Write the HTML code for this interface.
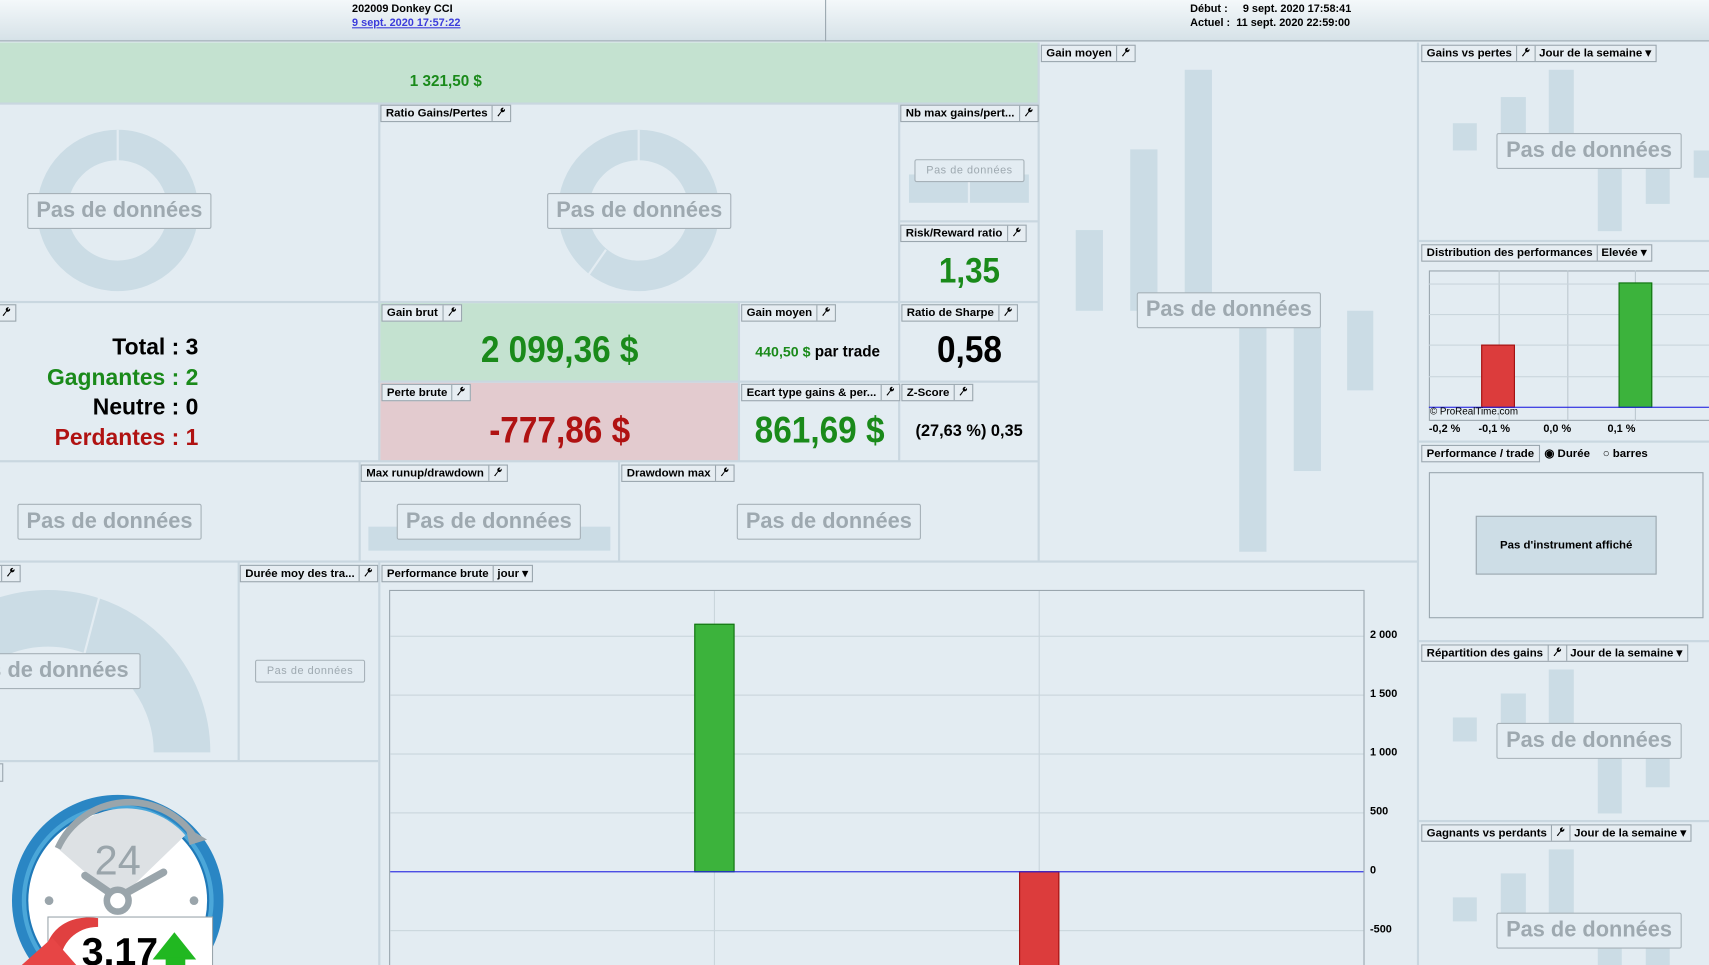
<!DOCTYPE html>
<html><head><meta charset="utf-8"><style>
*{margin:0;padding:0;box-sizing:border-box}
html,body{width:1709px;height:965px;overflow:hidden;background:#e3ecf2;font-family:"Liberation Sans",Arial,sans-serif}
#s{position:absolute;left:0;top:0;width:1568px;height:885px;transform:scale(1.0899,1.0904);transform-origin:0 0;overflow:hidden;background:#e3ecf2}
.a{position:absolute}
.h{position:absolute;height:2px;background:#c9d7e0}
.v{position:absolute;width:2px;background:#c9d7e0}
.g{position:absolute;background:#cbdce5}
.tab{position:absolute;height:16px;border:1px solid #9aa6ae;background:#e6edf2;font-size:10.5px;font-weight:bold;line-height:14px;padding:0 4px;white-space:nowrap;color:#000;display:flex;align-items:center}
.tab span{display:inline-block}
.tab .w{border-left:1px solid #9aa6ae;margin-left:4px;padding-left:3px;height:14px;line-height:14px}
.pd{position:absolute;border:1px solid #a6b1b8;background:#e3ecf2;color:#9ea9b0;font-weight:bold;font-size:20px;text-align:center;border-radius:2px}
.big{position:absolute;font-weight:bold;text-align:center;transform:scaleX(.9)}
</style></head><body>
<svg width="0" height="0" style="position:absolute"><defs><symbol id="wr" viewBox="0 0 10 10"><path d="M1.5 9.2 L5.2 4.6 A2.4 2.4 0 0 1 8 1 L6.6 2.8 L7.6 3.6 L9 2 A2.4 2.4 0 0 1 5.8 5.2 L2.6 9.8 Z" fill="#000"/></symbol></defs></svg>
<div id="s">
<!-- header -->
<div class="a" style="left:0;top:0;width:1568px;height:38px;background:linear-gradient(#f4f8fa,#d6e2e8);border-bottom:1px solid #9aa7af"></div>
<div class="a" style="left:757px;top:0;width:1px;height:38px;background:#9aa7af"></div>
<div class="a" style="left:323px;top:3px;font-size:10px;font-weight:bold">202009 Donkey CCI</div>
<div class="a" style="left:323px;top:16px;font-size:10px;font-weight:bold;color:#3b3bdb;text-decoration:underline">9 sept. 2020 17:57:22</div>
<div class="a" style="left:1092px;top:3px;font-size:10px;font-weight:bold;white-space:pre">Début :     9 sept. 2020 17:58:41</div>
<div class="a" style="left:1092px;top:16px;font-size:10px;font-weight:bold;white-space:pre">Actuel :  11 sept. 2020 22:59:00</div>
<!-- green band -->
<div class="a" style="left:0;top:39px;width:953px;height:55px;background:#c4e2d0"></div>
<div class="a" style="left:376px;top:66px;font-size:14px;font-weight:bold;color:#1a8a1a">1 321,50 $</div>
<!-- panel backgrounds -->
<div class="a" style="left:349px;top:278px;width:329px;height:72px;background:#c4e2d0"></div>
<div class="a" style="left:349px;top:351px;width:329px;height:72px;background:#e3cbcf"></div>
<!-- dividers -->
<div class="h" style="left:0;top:94px;width:953px"></div>
<div class="h" style="left:0;top:276px;width:953px"></div>
<div class="h" style="left:347px;top:349px;width:606px"></div>
<div class="h" style="left:0;top:422px;width:953px"></div>
<div class="h" style="left:0;top:514px;width:1301px"></div>
<div class="h" style="left:824px;top:202px;width:129px"></div>
<div class="h" style="left:0;top:697px;width:347px"></div>
<div class="v" style="left:347px;top:94px;height:329px"></div>
<div class="v" style="left:824px;top:94px;height:329px"></div>
<div class="v" style="left:677px;top:277px;height:146px"></div>
<div class="v" style="left:952px;top:39px;height:476px"></div>
<div class="v" style="left:1300px;top:39px;height:846px"></div>
<div class="v" style="left:329px;top:423px;height:92px"></div>
<div class="v" style="left:567px;top:423px;height:92px"></div>
<div class="v" style="left:218px;top:515px;height:183px"></div>
<div class="v" style="left:347px;top:515px;height:370px"></div>
<div class="h" style="left:1301px;top:220px;width:267px"></div>
<div class="h" style="left:1301px;top:404px;width:267px"></div>
<div class="h" style="left:1301px;top:587px;width:267px"></div>
<div class="h" style="left:1301px;top:752px;width:267px"></div>

<!-- donuts -->
<svg class="a" style="left:0;top:94px" width="700" height="183">
<circle cx="108" cy="99" r="60" fill="none" stroke="#cbdce5" stroke-width="28"/>
<line x1="108" y1="25" x2="108" y2="55" stroke="#e3ecf2" stroke-width="2"/>
<circle cx="586" cy="99" r="60" fill="none" stroke="#cbdce5" stroke-width="28"/>
<line x1="586" y1="25" x2="586" y2="55" stroke="#e3ecf2" stroke-width="2"/>
<line x1="556" y1="135" x2="540" y2="158" stroke="#e3ecf2" stroke-width="2"/>
</svg>
<div class="pd" style="left:25px;top:177px;width:169px;height:33px;line-height:31px">Pas de données</div>
<div class="pd" style="left:502px;top:177px;width:169px;height:33px;line-height:31px">Pas de données</div>
<div class="tab" style="left:349px;top:96px"><span>Ratio Gains/Pertes</span><span class="w"><svg width="9" height="9"><use href="#wr"/></svg></span></div>

<!-- Nb max -->
<div class="g" style="left:834px;top:160px;width:54px;height:26px"></div>
<div class="g" style="left:890px;top:160px;width:54px;height:26px"></div>
<div class="pd" style="left:839px;top:146px;width:101px;height:21px;font-size:10px;line-height:19px;font-weight:normal;letter-spacing:.5px">Pas de données</div>
<div class="tab" style="left:826px;top:96px"><span>Nb max gains/pert...</span><span class="w"><svg width="9" height="9"><use href="#wr"/></svg></span></div>
<div class="tab" style="left:826px;top:206px"><span>Risk/Reward ratio</span><span class="w"><svg width="9" height="9"><use href="#wr"/></svg></span></div>
<div class="big" style="left:826px;top:230px;width:127px;font-size:32px;color:#1a8a1a">1,35</div>

<!-- stats -->
<div class="a" style="left:0;top:305px;width:182px;text-align:right;font-size:21px;font-weight:bold;line-height:27.5px">
<div>Total : 3</div><div style="color:#1a8a1a">Gagnantes : 2</div><div>Neutre : 0</div><div style="color:#b01212">Perdantes : 1</div></div>
<div class="tab" style="left:-30px;top:279px"><span>xxx</span><span class="w"><svg width="9" height="9"><use href="#wr"/></svg></span></div>

<div class="tab" style="left:350px;top:279px"><span>Gain brut</span><span class="w"><svg width="9" height="9"><use href="#wr"/></svg></span></div>
<div class="big" style="left:349px;top:302px;width:329px;font-size:34px;color:#1a8a1a">2 099,36 $</div>
<div class="tab" style="left:350px;top:352px"><span>Perte brute</span><span class="w"><svg width="9" height="9"><use href="#wr"/></svg></span></div>
<div class="big" style="left:349px;top:376px;width:329px;font-size:34px;color:#b01212">-777,86 $</div>
<div class="tab" style="left:680px;top:279px"><span>Gain moyen</span><span class="w"><svg width="9" height="9"><use href="#wr"/></svg></span></div>
<div class="a" style="left:693px;top:314px;font-size:14px;font-weight:bold;white-space:nowrap"><span style="color:#1a8a1a;font-size:13px">440,50 $</span> par trade</div>
<div class="tab" style="left:680px;top:352px"><span>Ecart type gains &amp; per...</span><span class="w"><svg width="9" height="9"><use href="#wr"/></svg></span></div>
<div class="big" style="left:680px;top:376px;width:144px;font-size:34px;color:#1a8a1a">861,69 $</div>
<div class="tab" style="left:827px;top:279px"><span>Ratio de Sharpe</span><span class="w"><svg width="9" height="9"><use href="#wr"/></svg></span></div>
<div class="big" style="left:826px;top:302px;width:127px;font-size:34px">0,58</div>
<div class="tab" style="left:827px;top:352px"><span>Z-Score</span><span class="w"><svg width="9" height="9"><use href="#wr"/></svg></span></div>
<div class="a" style="left:840px;top:387px;font-size:15px;font-weight:bold">(27,63 %) 0,35</div>

<!-- row 423-515 -->
<div class="pd" style="left:16px;top:462px;width:169px;height:33px;line-height:31px">Pas de données</div>
<div class="g" style="left:338px;top:483px;width:222px;height:22px"></div>
<div class="pd" style="left:364px;top:462px;width:169px;height:33px;line-height:31px">Pas de données</div>
<div class="tab" style="left:331px;top:426px"><span>Max runup/drawdown</span><span class="w"><svg width="9" height="9"><use href="#wr"/></svg></span></div>
<div class="pd" style="left:676px;top:462px;width:169px;height:33px;line-height:31px">Pas de données</div>
<div class="tab" style="left:570px;top:426px"><span>Drawdown max</span><span class="w"><svg width="9" height="9"><use href="#wr"/></svg></span></div>

<!-- gauge -->
<svg class="a" style="left:0;top:515px" width="218" height="183">
<path d="M-79 175 A123 123 0 0 1 167 175" fill="none" stroke="#cbdce5" stroke-width="52"/>
<line x1="92" y1="29" x2="76" y2="90" stroke="#e3ecf2" stroke-width="2"/>
</svg>
<div class="pd" style="left:-40px;top:599px;width:169px;height:33px;line-height:31px;text-align:right;padding-right:10px">Pas de données</div>
<div class="tab" style="left:-20px;top:518px"><span>xx</span><span class="w"><svg width="9" height="9"><use href="#wr"/></svg></span></div>
<div class="tab" style="left:220px;top:518px"><span>Durée moy des tra...</span><span class="w"><svg width="9" height="9"><use href="#wr"/></svg></span></div>
<div class="pd" style="left:234px;top:605px;width:101px;height:21px;font-size:10px;line-height:19px;font-weight:normal;letter-spacing:.5px">Pas de données</div>
<div class="a" style="left:-5px;top:700px;width:8px;height:17px;border:1px solid #9aa6ae"></div>

<!-- clock -->
<svg class="a" style="left:0;top:720px" width="220" height="165">
<circle cx="108" cy="106" r="97" fill="#2a86c4"/>
<circle cx="108" cy="106" r="88" fill="#4ba7d9"/>
<circle cx="108" cy="106" r="84" fill="#1f79b8"/>
<circle cx="108" cy="106" r="82" fill="#fff"/>
<path d="M53 58 A72 72 0 0 1 170 46 L108 106 Z" fill="#dde1e4"/>
<path d="M53 58 A72 72 0 0 1 178 47" fill="none" stroke="#9aa5ab" stroke-width="6"/>
<path d="M170 38 L190 50 L174 55 Z" fill="#9aa5ab"/>
<text x="108" y="82" text-anchor="middle" font-family="Liberation Sans" font-size="38" fill="#9aa5ab">24</text>
<path d="M78 83 L104 101 M112 101 L150 80" stroke="#9aa5ab" stroke-width="7" stroke-linecap="round"/>
<circle cx="108" cy="106" r="10" fill="#fff" stroke="#9aa5ab" stroke-width="6"/>
<circle cx="45" cy="106" r="4" fill="#9aa5ab"/><circle cx="178" cy="106" r="4" fill="#9aa5ab"/>
<rect x="44" y="121" width="151" height="50" fill="#fff" stroke="#9aa5ab"/>
<path d="M90 122 C60 118 40 135 40 165 L55 165 C55 145 70 130 90 130 Z" fill="#e04040"/>
<path d="M20 165 L48 140 L70 165 Z" fill="#e74545"/>
<path d="M160 135 L180 160 L140 160 Z" fill="#21b821"/>
<rect x="152" y="158" width="18" height="10" fill="#21b821"/>
<text x="110" y="165" text-anchor="middle" font-family="Liberation Sans" font-weight="bold" font-size="36">3,17</text>
</svg>

<!-- Gain moyen big panel -->
<div class="g" style="left:987px;top:211px;width:25px;height:74px"></div>
<div class="g" style="left:1037px;top:137px;width:25px;height:148px"></div>
<div class="g" style="left:1087px;top:64px;width:25px;height:221px"></div>
<div class="g" style="left:1137px;top:285px;width:25px;height:221px"></div>
<div class="g" style="left:1187px;top:285px;width:25px;height:147px"></div>
<div class="g" style="left:1236px;top:285px;width:24px;height:73px"></div>
<div class="pd" style="left:1043px;top:268px;width:169px;height:33px;line-height:31px">Pas de données</div>
<div class="tab" style="left:955px;top:41px"><span>Gain moyen</span><span class="w"><svg width="9" height="9"><use href="#wr"/></svg></span></div>

<!-- Performance brute chart -->
<div class="tab" style="left:350px;top:518px"><span>Performance brute</span><span class="w">jour ▾</span></div>
<div class="a" style="left:357px;top:541px;width:895px;height:350px;border:1px solid #9aa6ae"></div>
<div class="a" style="left:655px;top:542px;width:1px;height:343px;background:#c9d5dc"></div>
<div class="a" style="left:953px;top:542px;width:1px;height:343px;background:#c9d5dc"></div>
<div class="a" style="left:358px;top:583px;width:893px;height:1px;background:#c9d5dc"></div>
<div class="a" style="left:358px;top:637px;width:893px;height:1px;background:#c9d5dc"></div>
<div class="a" style="left:358px;top:691px;width:893px;height:1px;background:#c9d5dc"></div>
<div class="a" style="left:358px;top:745px;width:893px;height:1px;background:#c9d5dc"></div>
<div class="a" style="left:358px;top:853px;width:893px;height:1px;background:#c9d5dc"></div>
<div class="a" style="left:637px;top:572px;width:37px;height:228px;background:#3cb33c;border:1px solid #107010"></div>
<div class="a" style="left:935px;top:799px;width:37px;height:90px;background:#dc3c3c;border:1px solid #a01010"></div>
<div class="a" style="left:358px;top:799px;width:893px;height:1px;background:#2020e0"></div>
<div class="a" style="left:1257px;top:556px;font-size:10px;font-weight:bold;line-height:54px">2 000<br>1 500<br>1 000<br>500<br>0<br>-500</div>

<!-- right column -->
<div class="tab" style="left:1304px;top:41px"><span>Gains vs pertes</span><span class="w"><svg width="9" height="9"><use href="#wr"/></svg></span><span class="w">Jour de la semaine ▾</span></div>
<div class="g" style="left:1333px;top:113px;width:22px;height:25px"></div>
<div class="g" style="left:1377px;top:89px;width:23px;height:49px"></div>
<div class="g" style="left:1421px;top:64px;width:23px;height:74px"></div>
<div class="g" style="left:1466px;top:138px;width:22px;height:74px"></div>
<div class="g" style="left:1510px;top:138px;width:22px;height:49px"></div>
<div class="g" style="left:1554px;top:138px;width:22px;height:25px"></div>
<div class="pd" style="left:1373px;top:122px;width:170px;height:33px;line-height:31px">Pas de données</div>

<div class="tab" style="left:1304px;top:224px"><span>Distribution des performances</span><span class="w">Elevée ▾</span></div>
<div class="a" style="left:1311px;top:248px;width:275px;height:138px;border:1px solid #9aa6ae"></div>
<div class="a" style="left:1375px;top:248px;width:1px;height:138px;background:#bcc8cf"></div>
<div class="a" style="left:1438px;top:248px;width:1px;height:138px;background:#bcc8cf"></div>
<div class="a" style="left:1500px;top:248px;width:1px;height:138px;background:#bcc8cf"></div>
<div class="a" style="left:1311px;top:260px;width:257px;height:1px;background:#c9d5dc"></div>
<div class="a" style="left:1311px;top:288px;width:257px;height:1px;background:#c9d5dc"></div>
<div class="a" style="left:1311px;top:316px;width:257px;height:1px;background:#c9d5dc"></div>
<div class="a" style="left:1311px;top:345px;width:257px;height:1px;background:#c9d5dc"></div>
<div class="a" style="left:1359px;top:316px;width:31px;height:58px;background:#dc3c3c;border:1px solid #a01010"></div>
<div class="a" style="left:1485px;top:259px;width:31px;height:115px;background:#3cb33c;border:1px solid #107010"></div>
<div class="a" style="left:1311px;top:373px;width:257px;height:1px;background:#2020e0"></div>
<div class="a" style="left:1312px;top:372px;font-size:9px">© ProRealTime.com</div>
<div class="a" style="left:1311px;top:388px;font-size:10px;font-weight:bold;white-space:pre">-0,2 %      -0,1 %           0,0 %            0,1 %</div>

<div class="tab" style="left:1304px;top:408px"><span>Performance / trade</span></div>
<div class="a" style="left:1417px;top:410px;font-size:10.5px;font-weight:bold;white-space:nowrap">◉ Durée &nbsp;&nbsp; ○ barres</div>
<div class="a" style="left:1311px;top:433px;width:252px;height:134px;border:1px solid #9aa6ae"></div>
<div class="a" style="left:1354px;top:473px;width:166px;height:54px;background:#cddde6;border:1px solid #9aa6ae;font-size:10.5px;font-weight:bold;text-align:center;line-height:52px">Pas d'instrument affiché</div>

<div class="tab" style="left:1304px;top:591px"><span>Répartition des gains</span><span class="w"><svg width="9" height="9"><use href="#wr"/></svg></span><span class="w">Jour de la semaine ▾</span></div>
<div class="g" style="left:1333px;top:658px;width:22px;height:22px"></div>
<div class="g" style="left:1377px;top:636px;width:23px;height:44px"></div>
<div class="g" style="left:1421px;top:614px;width:23px;height:66px"></div>
<div class="g" style="left:1466px;top:680px;width:22px;height:66px"></div>
<div class="g" style="left:1510px;top:680px;width:22px;height:42px"></div>
<div class="pd" style="left:1373px;top:663px;width:170px;height:33px;line-height:31px">Pas de données</div>

<div class="tab" style="left:1304px;top:756px"><span>Gagnants vs perdants</span><span class="w"><svg width="9" height="9"><use href="#wr"/></svg></span><span class="w">Jour de la semaine ▾</span></div>
<div class="g" style="left:1333px;top:823px;width:22px;height:22px"></div>
<div class="g" style="left:1377px;top:801px;width:23px;height:44px"></div>
<div class="g" style="left:1421px;top:779px;width:23px;height:66px"></div>
<div class="g" style="left:1466px;top:845px;width:22px;height:40px"></div>
<div class="g" style="left:1510px;top:845px;width:22px;height:40px"></div>
<div class="pd" style="left:1373px;top:837px;width:170px;height:33px;line-height:31px">Pas de données</div>
</div></body></html>
